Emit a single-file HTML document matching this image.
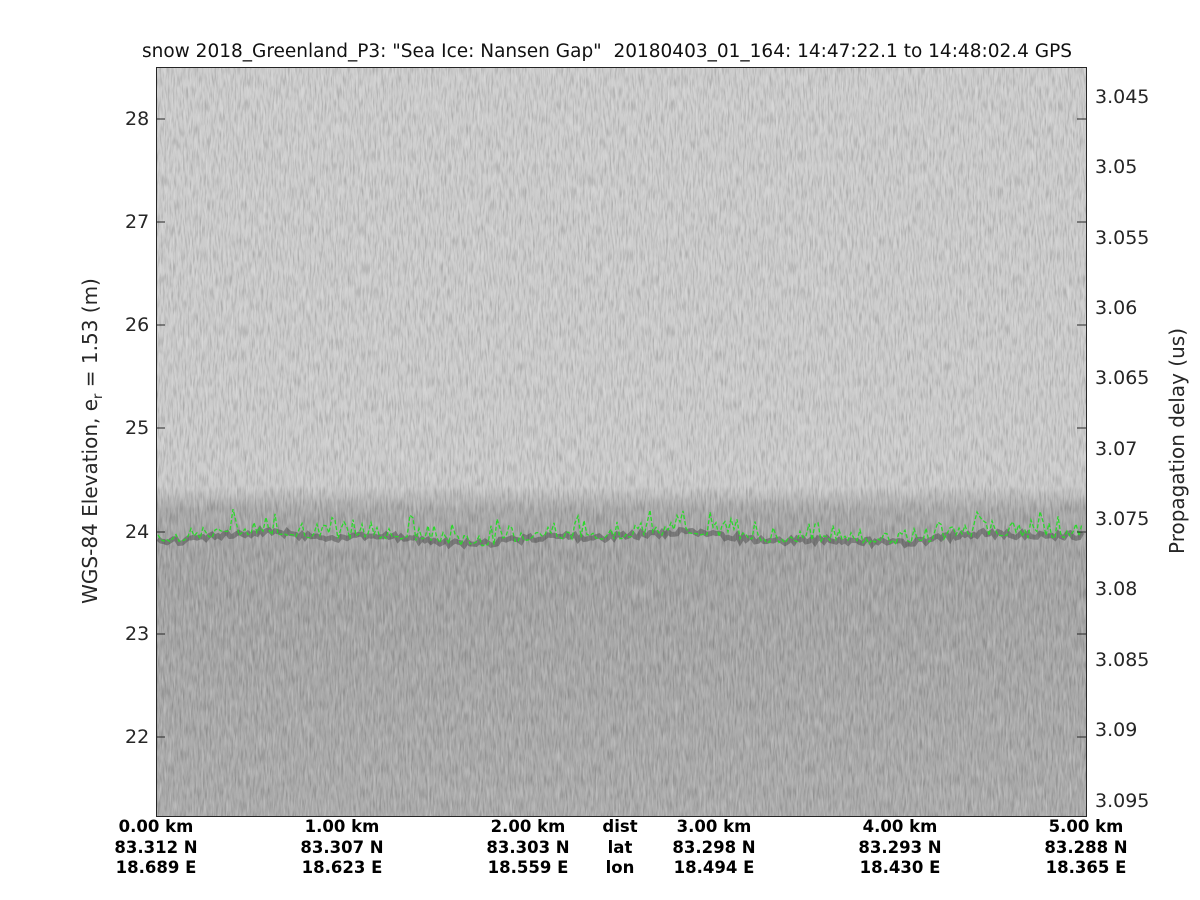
<!DOCTYPE html>
<html><head><meta charset="utf-8"><style>
body{margin:0;width:1200px;height:900px;background:#fff;font-family:"DejaVu Sans","Liberation Sans",sans-serif;position:relative;overflow:hidden}
.t{position:absolute;color:#262626;white-space:nowrap}
.yl{font-size:19px;transform:translateY(-50%)}
.b{font-size:16.5px;font-weight:bold;transform:translateX(-50%);color:#000}
</style></head><body>
<div class="t" style="left:0;width:1242px;text-align:center;top:41px;font-size:18.5px;color:#111;transform:translateX(-14px)">snow 2018_Greenland_P3: "Sea Ice: Nansen Gap"&nbsp; 20180403_01_164: 14:47:22.1 to 14:48:02.4 GPS</div>
<svg style="position:absolute;left:0;top:0" width="1200" height="900">
<defs>
<linearGradient id="g" x1="0" y1="0" x2="0" y2="1">
<stop offset="0" stop-color="#cdcdcd"/><stop offset="0.56" stop-color="#cbcbcb"/>
<stop offset="0.59" stop-color="#aaaaaa"/><stop offset="0.65" stop-color="#a4a4a4"/><stop offset="1" stop-color="#acacac"/>
</linearGradient>
<filter id="n" x="0" y="0" width="1" height="1"><feTurbulence type="fractalNoise" baseFrequency="0.6 0.08" numOctaves="2" seed="3"/><feColorMatrix type="matrix" values="0 0 0 0 0  0 0 0 0 0  0 0 0 0 0  0 0 0 -1.3 0.75"/></filter>
<filter id="n2" x="0" y="0" width="1" height="1"><feTurbulence type="fractalNoise" baseFrequency="0.5 0.06" numOctaves="2" seed="9"/><feColorMatrix type="matrix" values="0 0 0 0 1  0 0 0 0 1  0 0 0 0 1  0 0 0 -1.4 0.8"/></filter>
</defs>
<rect x="156" y="67" width="930" height="749" fill="url(#g)"/>
<rect x="156" y="67" width="930" height="749" filter="url(#n)" opacity="0.3"/>
<rect x="156" y="67" width="930" height="749" filter="url(#n2)" opacity="0.4"/>
<polyline id="dk" fill="none" stroke="#222" stroke-width="5" opacity="0.35"/>
<polyline id="gr" fill="none" stroke="#2bd82b" stroke-width="1.3" stroke-dasharray="4 2"/>
<rect x="156.5" y="67.5" width="930" height="749" fill="none" stroke="#262626"/>
<g stroke="#262626">
<line x1="156" x2="165" y1="119" y2="119"/><line x1="156" x2="165" y1="222" y2="222"/><line x1="156" x2="165" y1="325" y2="325"/><line x1="156" x2="165" y1="428" y2="428"/><line x1="156" x2="165" y1="532" y2="532"/><line x1="156" x2="165" y1="634" y2="634"/><line x1="156" x2="165" y1="737" y2="737"/>
<line x1="1077" x2="1086" y1="119" y2="119"/><line x1="1077" x2="1086" y1="222" y2="222"/><line x1="1077" x2="1086" y1="325" y2="325"/><line x1="1077" x2="1086" y1="428" y2="428"/><line x1="1077" x2="1086" y1="532" y2="532"/><line x1="1077" x2="1086" y1="634" y2="634"/><line x1="1077" x2="1086" y1="737" y2="737"/>
</g>
</svg>
<div class="t yl" style="left:125px;top:119px">28</div>
<div class="t yl" style="left:125px;top:222px">27</div>
<div class="t yl" style="left:125px;top:325px">26</div>
<div class="t yl" style="left:125px;top:428px">25</div>
<div class="t yl" style="left:125px;top:532px">24</div>
<div class="t yl" style="left:125px;top:634px">23</div>
<div class="t yl" style="left:125px;top:737px">22</div>
<div class="t yl" style="left:1095px;top:97px">3.045</div>
<div class="t yl" style="left:1095px;top:167px">3.05</div>
<div class="t yl" style="left:1095px;top:238px">3.055</div>
<div class="t yl" style="left:1095px;top:308px">3.06</div>
<div class="t yl" style="left:1095px;top:378px">3.065</div>
<div class="t yl" style="left:1095px;top:449px">3.07</div>
<div class="t yl" style="left:1095px;top:519px">3.075</div>
<div class="t yl" style="left:1095px;top:589px">3.08</div>
<div class="t yl" style="left:1095px;top:660px">3.085</div>
<div class="t yl" style="left:1095px;top:730px">3.09</div>
<div class="t yl" style="left:1095px;top:801px">3.095</div>
<div class="t" style="left:92px;top:441px;font-size:20px;transform:translate(-50%,-50%) rotate(-90deg)">WGS-84 Elevation, e<sub style="font-size:13px">r</sub> = 1.53 (m)</div>
<div class="t" style="left:1177px;top:441px;font-size:20px;transform:translate(-50%,-50%) rotate(-90deg)">Propagation delay (us)</div>
<div class="t b" style="left:156px;top:817px;text-align:center;line-height:20.5px">0.00 km<br>83.312 N<br>18.689 E</div>
<div class="t b" style="left:342px;top:817px;text-align:center;line-height:20.5px">1.00 km<br>83.307 N<br>18.623 E</div>
<div class="t b" style="left:528px;top:817px;text-align:center;line-height:20.5px">2.00 km<br>83.303 N<br>18.559 E</div>
<div class="t b" style="left:620px;top:817px;text-align:center;line-height:20.5px">dist<br>lat<br>lon</div>
<div class="t b" style="left:714px;top:817px;text-align:center;line-height:20.5px">3.00 km<br>83.298 N<br>18.494 E</div>
<div class="t b" style="left:900px;top:817px;text-align:center;line-height:20.5px">4.00 km<br>83.293 N<br>18.430 E</div>
<div class="t b" style="left:1086px;top:817px;text-align:center;line-height:20.5px">5.00 km<br>83.288 N<br>18.365 E</div>
<script>
var s=7,p=[],q=[];function r(){s=(s*9301+49297)%233280;return s/233280;}
for(var x=158;x<=1084;x+=3){var base=532+4*Math.sin(x/60)+2*Math.sin(x/23);var y=base-r()*r()*30+8;p.push(x+","+y.toFixed(1));q.push(x+","+(base+6+r()*6-3).toFixed(1));}
document.getElementById('gr').setAttribute('points',p.join(' '));
document.getElementById('dk').setAttribute('points',q.join(' '));
</script>
</body></html>
